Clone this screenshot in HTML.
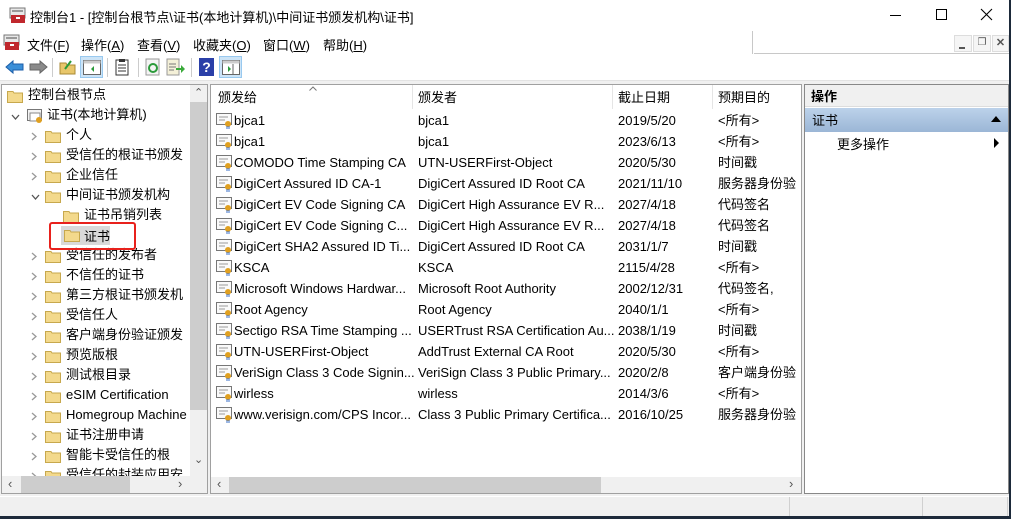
<!DOCTYPE html>
<html><head><meta charset="utf-8">
<style>
*{margin:0;padding:0;box-sizing:border-box}
body{width:1011px;height:519px;overflow:hidden;background:#1d2a3a;font-family:"Liberation Sans","Noto Sans CJK SC",sans-serif;font-size:13px;color:#000;position:relative}
.a{position:absolute;white-space:nowrap}
.win{position:absolute;left:0;top:0;width:1009px;height:516px;background:#f0f0f0}
.title{position:absolute;left:0;top:0;width:1009px;height:31px;background:#fff}
.menu{position:absolute;left:0;top:31px;width:1009px;height:24px;background:#fff}
.tb{position:absolute;left:0;top:55px;width:1009px;height:26px;background:#fff;border-bottom:1px solid #e3e3e3}
.pane{position:absolute;background:#fff;border:1px solid #a0a0a0}
.row{position:absolute;height:21px;line-height:21px}
.col{position:absolute;top:0}
.sep{position:absolute;width:1px;background:#e5e5e5}
</style></head><body>
<div class="win">
<div class="title">
 <svg class="a" style="left:9px;top:7px" width="18" height="17"><rect x="1" y="1" width="15" height="10" fill="#e8e8e8" stroke="#777"/><rect x="3" y="3" width="11" height="2" fill="#999"/><rect x="2" y="8" width="14" height="8" fill="#c0282d"/><rect x="7" y="10" width="4" height="2" fill="#fff"/></svg>
 <div class="a" style="left:30px;top:7px;font-size:13px">控制台1 - [控制台根节点\证书(本地计算机)\中间证书颁发机构\证书]</div>
 <div class="a" style="left:890px;top:15px;width:11px;height:1px;background:#000"></div>
 <div class="a" style="left:936px;top:9px;width:11px;height:11px;border:1px solid #000"></div>
 <svg class="a" style="left:980px;top:8px" width="13" height="13"><path d="M1 1L12 12M12 1L1 12" stroke="#000" stroke-width="1.1"/></svg>
</div>
<div class="menu">
 <svg class="a" style="left:3px;top:3px" width="18" height="17"><rect x="1" y="1" width="15" height="10" fill="#e8e8e8" stroke="#777"/><rect x="3" y="3" width="11" height="2" fill="#999"/><rect x="2" y="8" width="14" height="8" fill="#c0282d"/><rect x="7" y="10" width="4" height="2" fill="#fff"/></svg>
 <div class="a" style="left:27px;top:4px">文件(<u>F</u>)</div>
 <div class="a" style="left:81px;top:4px">操作(<u>A</u>)</div>
 <div class="a" style="left:137px;top:4px">查看(<u>V</u>)</div>
 <div class="a" style="left:193px;top:4px">收藏夹(<u>O</u>)</div>
 <div class="a" style="left:263px;top:4px">窗口(<u>W</u>)</div>
 <div class="a" style="left:323px;top:4px">帮助(<u>H</u>)</div>
 <div class="a" style="top:0;width:1px;height:23px;background:#c8c8c8;left:752px"></div>
 <div class="a" style="left:754px;top:22px;width:255px;height:1px;background:#c8c8c8"></div>
 <div class="a" style="left:954px;top:4px;width:18px;height:17px;border:1px solid #ddd;background:#f5f5f5"></div>
 <div class="a" style="left:959px;top:16px;width:6px;height:2px;background:#555"></div>
 <div class="a" style="left:973px;top:4px;width:18px;height:17px;border:1px solid #ddd;background:#f5f5f5;font-size:10px;color:#555;text-align:center;line-height:14px">❐</div>
 <div class="a" style="left:992px;top:4px;width:17px;height:17px;border:1px solid #ddd;background:#f5f5f5;font-size:11px;font-weight:bold;color:#555;text-align:center;line-height:15px">✕</div>
</div>
<div class="tb">
 <svg class="a" style="left:5px;top:4px" width="20" height="16"><path d="M1 8L8 2V5H18V11H8V14Z" fill="#3b8fd8" stroke="#1c5ea8"/></svg>
 <svg class="a" style="left:28px;top:4px" width="20" height="16"><path d="M19 8L12 2V5H2V11H12V14Z" fill="#8a8a8a" stroke="#666"/></svg>
 <div class="a" style="left:52px;top:3px;width:1px;height:19px;background:#ccc"></div>
 <svg class="a" style="left:59px;top:3px" width="18" height="18"><path d="M1 5H7L8 7H16V16H1Z" fill="#e8c66a" stroke="#a88a34"/><path d="M6 11L12 3" stroke="#2a9a3a" stroke-width="2"/></svg>
 <div class="a" style="left:80px;top:1px;width:23px;height:22px;background:#cce4f7;border:1px solid #99c9ef"></div>
 <svg class="a" style="left:83px;top:5px" width="18" height="15"><rect x="0.5" y="0.5" width="17" height="14" fill="#fff" stroke="#666"/><rect x="0.5" y="0.5" width="17" height="3" fill="#ccc"/><path d="M11 6V12L8 9Z" fill="#2a9a3a"/></svg>
 <div class="a" style="left:107px;top:3px;width:1px;height:19px;background:#ccc"></div>
 <svg class="a" style="left:114px;top:3px" width="16" height="18"><rect x="2" y="2" width="12" height="15" fill="#fff" stroke="#333"/><rect x="5" y="1" width="6" height="3" fill="#333"/><path d="M4 7H12M4 10H12M4 13H12" stroke="#333"/></svg>
 <div class="a" style="left:138px;top:3px;width:1px;height:19px;background:#ccc"></div>
 <svg class="a" style="left:145px;top:3px" width="16" height="18"><rect x="1" y="1" width="13" height="16" fill="#f4f4f4" stroke="#999"/><circle cx="8" cy="10" r="4" fill="none" stroke="#2a9a3a" stroke-width="2"/></svg>
 <svg class="a" style="left:166px;top:3px" width="20" height="18"><rect x="1" y="1" width="12" height="16" fill="#f4f0d8" stroke="#999"/><path d="M3 6H10M3 9H10M3 12H8" stroke="#777"/><path d="M10 10H15V7L19 11L15 15V12H10Z" fill="#3aaa3a"/></svg>
 <div class="a" style="left:191px;top:3px;width:1px;height:19px;background:#ccc"></div>
 <div class="a" style="left:199px;top:3px;width:15px;height:18px;background:#2a3fa8;color:#fff;font-weight:bold;font-size:14px;text-align:center;line-height:18px">?</div>
 <div class="a" style="left:219px;top:1px;width:23px;height:22px;background:#cce4f7;border:1px solid #99c9ef"></div>
 <svg class="a" style="left:222px;top:5px" width="18" height="15"><rect x="0.5" y="0.5" width="17" height="14" fill="#fff" stroke="#666"/><rect x="0.5" y="0.5" width="17" height="3" fill="#ccc"/><path d="M6 6V12L9 9Z" fill="#2a9a3a"/><path d="M11 4V14" stroke="#666"/></svg>
</div>

<div class="pane" style="left:1px;top:84px;width:207px;height:410px">
 <div id="tree"></div>
 <div class="a" style="left:188px;top:0;width:17px;height:391px;background:#f0f0f0"></div>
 <div class="a" style="left:188px;top:17px;width:17px;height:308px;background:#cdcdcd"></div>
 <div class="a" style="left:192px;top:1px;font-size:11px;color:#555">&#8963;</div>
 <div class="a" style="left:192px;top:368px;font-size:11px;color:#555">&#8964;</div>
 <div class="a" style="left:0;top:391px;width:205px;height:17px;background:#f0f0f0"></div>
 <div class="a" style="left:19px;top:391px;width:109px;height:17px;background:#cdcdcd"></div>
 <div class="a" style="left:6px;top:391px;font-size:13px;color:#555">&lsaquo;</div>
 <div class="a" style="left:176px;top:391px;font-size:13px;color:#555">&rsaquo;</div>
</div>

<div class="pane" style="left:210px;top:84px;width:592px;height:410px">
 <div class="a" style="left:0;top:0;width:590px;height:24px;background:#fff"></div>
 <div class="a" style="left:7px;top:2px">颁发给</div>
 <svg class="a" style="left:98px;top:1px" width="8" height="5"><path d="M0.5 4.5L4 1L7.5 4.5" fill="none" stroke="#777"/></svg>
 <div class="sep" style="left:201px;top:0;height:24px"></div>
 <div class="a" style="left:207px;top:2px">颁发者</div>
 <div class="sep" style="left:401px;top:0;height:24px"></div>
 <div class="a" style="left:407px;top:2px">截止日期</div>
 <div class="sep" style="left:501px;top:0;height:24px"></div>
 <div class="a" style="left:507px;top:2px">预期目的</div>
 <div id="rows"></div>
 <div class="a" style="left:0;top:392px;width:590px;height:16px;background:#f0f0f0"></div>
 <div class="a" style="left:18px;top:392px;width:372px;height:16px;background:#cdcdcd"></div>
 <div class="a" style="left:6px;top:391px;font-size:13px;color:#555">&lsaquo;</div>
 <div class="a" style="left:578px;top:391px;font-size:13px;color:#555">&rsaquo;</div>
</div>

<div class="pane" style="left:804px;top:84px;width:205px;height:410px;border-color:#888">
 <div class="a" style="left:0;top:0;width:203px;height:22px;background:#f0f0f0;border-bottom:1px solid #ddd"></div>
 <div class="a" style="left:6px;top:1px;font-weight:bold">操作</div>
 <div class="a" style="left:0;top:23px;width:203px;height:24px;background:linear-gradient(#bcd2ea,#9bb6d6)"></div>
 <div class="a" style="left:7px;top:25px">证书</div>
 <svg class="a" style="left:186px;top:31px" width="10" height="6"><path d="M0 6L5 0L10 6Z" fill="#000"/></svg>
 <div class="a" style="left:32px;top:49px">更多操作</div>
 <svg class="a" style="left:189px;top:53px" width="5" height="10"><path d="M0 0L5 5L0 10Z" fill="#000"/></svg>
</div>

<div class="a" style="left:0;top:496px;width:1009px;height:20px;background:#f0f0f0;border-top:1px solid #fff"></div>
<div class="a" style="left:789px;top:497px;width:1px;height:19px;background:#d0d0d0"></div>
<div class="a" style="left:922px;top:497px;width:1px;height:19px;background:#d0d0d0"></div>
<div class="a" style="left:1007px;top:497px;width:1px;height:19px;background:#d0d0d0"></div>

<div class="a" style="left:61px;top:226px;width:49px;height:19px;background:#d9d9d9"></div>
<svg class="a" style="left:64px;top:228px" width="16" height="14"><path d="M0.5 2.5H6L7 4H15.5V13.5H0.5Z" fill="#f3d98c" stroke="#c7a84d"/></svg>
<div class="a" style="left:84px;top:226px">证书</div>
<div class="a" style="left:49px;top:222px;width:87px;height:28px;border:2px solid #e8211c;border-radius:3px"></div>
</div>
<script>
var folder='<svg width="16" height="14" style="position:absolute;left:LEFTpx;top:3px"><path d="M0.5 2.5H6L7 4H15.5V13.5H0.5Z" fill="#f3d98c" stroke="#c7a84d"/></svg>';
var tree=[
[0,'',"控制台根节点",'f'],
[0,'v',"证书(本地计算机)",'c'],
[1,'>',"个人"],[1,'>',"受信任的根证书颁发机构"],[1,'>',"企业信任"],[1,'v',"中间证书颁发机构"],
[2,'',"证书吊销列表"],[2,'',"",'skip'],
[1,'>',"受信任的发布者"],[1,'>',"不信任的证书"],[1,'>',"第三方根证书颁发机构"],[1,'>',"受信任人"],[1,'>',"客户端身份验证颁发者"],[1,'>',"预览版根"],[1,'>',"测试根目录"],[1,'>',"eSIM Certification Authorities"],[1,'>',"Homegroup Machine Certificates"],[1,'>',"证书注册申请"],[1,'>',"智能卡受信任的根"],[1,'>',"受信任的封装应用安装"]];
var h='';
tree.forEach(function(t,i){
 if(t[3]=='skip')return;
 var top=1+20*i, ic=[5,43,61][t[0]];
 var tx=ic+21;
 h+='<div class="row" style="left:0;top:'+top+'px;width:188px;height:20px;overflow:hidden">';
 if(t[1]=='>')h+='<svg style="position:absolute;left:29px;top:6px" width="6" height="9"><path d="M1 1L5 4.5L1 8" fill="none" stroke="#999" stroke-width="1.3"/></svg>';
 if(t[1]=='v'){var vx=t[0]==0?9:29;h+='<svg style="position:absolute;left:'+vx+'px;top:8px" width="9" height="6"><path d="M1 1L4.5 5L8 1" fill="none" stroke="#555" stroke-width="1.3"/></svg>';}
 if(t[3]=='c'){tx=45;h+='<svg style="position:absolute;left:25px;top:3px" width="17" height="15"><rect x="0.5" y="0.5" width="14" height="11" fill="#f4f4f4" stroke="#777"/><rect x="3" y="4" width="10" height="8" fill="#fff" stroke="#888"/><circle cx="12" cy="11" r="3" fill="#e0a020"/></svg>';}
 else h+=folder.replace('LEFT',ic);
 h+='<span style="position:absolute;left:'+tx+'px;top:-2px">'+t[2]+'</span></div>';
});
document.getElementById('tree').innerHTML=h;
var rows=[
["bjca1","bjca1","2019/5/20","&lt;所有&gt;"],
["bjca1","bjca1","2023/6/13","&lt;所有&gt;"],
["COMODO Time Stamping CA","UTN-USERFirst-Object","2020/5/30","时间戳"],
["DigiCert Assured ID CA-1","DigiCert Assured ID Root CA","2021/11/10","服务器身份验证"],
["DigiCert EV Code Signing CA","DigiCert High Assurance EV R...","2027/4/18","代码签名"],
["DigiCert EV Code Signing C...","DigiCert High Assurance EV R...","2027/4/18","代码签名"],
["DigiCert SHA2 Assured ID Ti...","DigiCert Assured ID Root CA","2031/1/7","时间戳"],
["KSCA","KSCA","2115/4/28","&lt;所有&gt;"],
["Microsoft Windows Hardwar...","Microsoft Root Authority","2002/12/31","代码签名, Windows"],
["Root Agency","Root Agency","2040/1/1","&lt;所有&gt;"],
["Sectigo RSA Time Stamping ...","USERTrust RSA Certification Au...","2038/1/19","时间戳"],
["UTN-USERFirst-Object","AddTrust External CA Root","2020/5/30","&lt;所有&gt;"],
["VeriSign Class 3 Code Signin...","VeriSign Class 3 Public Primary...","2020/2/8","客户端身份验证"],
["wirless","wirless","2014/3/6","&lt;所有&gt;"],
["www.verisign.com/CPS Incor...","Class 3 Public Primary Certifica...","2016/10/25","服务器身份验证"]];
var r='';
rows.forEach(function(x,i){
 var top=25+21*i;
 r+='<div class="row" style="left:0;top:'+top+'px;width:590px;overflow:hidden">'+
 '<svg style="position:absolute;left:5px;top:3px" width="17" height="16"><rect x="0.5" y="0.5" width="15" height="11" fill="#fafafa" stroke="#777"/><path d="M3 4H12M3 7H9" stroke="#999"/><circle cx="12" cy="11" r="3" fill="#e0a020"/><path d="M11 13V16M13 13V16" stroke="#3a6fc8"/></svg>'+
 '<span class="col" style="left:23px">'+x[0]+'</span><span class="col" style="left:207px">'+x[1]+'</span><span class="col" style="left:407px">'+x[2]+'</span><span class="col" style="left:507px">'+x[3]+'</span></div>';
});
document.getElementById('rows').innerHTML=r;
</script>
</body></html>
